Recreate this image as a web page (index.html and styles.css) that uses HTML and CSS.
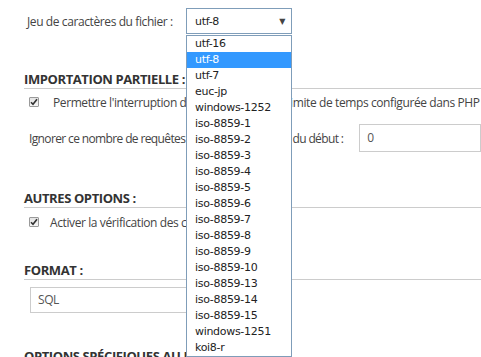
FILE: index.html
```html
<!DOCTYPE html>
<html lang="fr">
<head>
  <meta charset="UTF-8">
  <meta name="viewport" content="width=device-width, initial-scale=1.0">
  <title>Importer</title>
  <link rel="stylesheet" href="styles.css">
</head>
<body>
  <div class="page">
    <div class="charset-row">
      <label class="charset-label">Jeu de caractères du fichier :</label>
      <div class="select-box">
        <span>utf-8</span>
        <span class="arrow">▼</span>
        <ul class="select-list">
          <li>utf-16</li>
          <li class="active">utf-8</li>
          <li>utf-7</li>
          <li>euc-jp</li>
          <li>windows-1252</li>
          <li>iso-8859-1</li>
          <li>iso-8859-2</li>
          <li>iso-8859-3</li>
          <li>iso-8859-4</li>
          <li>iso-8859-5</li>
          <li>iso-8859-6</li>
          <li>iso-8859-7</li>
          <li>iso-8859-8</li>
          <li>iso-8859-9</li>
          <li>iso-8859-10</li>
          <li>iso-8859-13</li>
          <li>iso-8859-14</li>
          <li>iso-8859-15</li>
          <li>windows-1251</li>
          <li>koi8-r</li>
        </ul>
      </div>
    </div>

    <h2 class="section-title first">Importation partielle :</h2>
    <div class="check-row">
      <span class="checkbox"><svg viewBox="0 0 8 8" width="8" height="8"><path d="M1 4.2 L3 6.3 L7 1.2" fill="none" stroke="#333" stroke-width="1.6"/></svg></span>
      <span class="check-label">Permettre l'interruption de l'importation si la limite de temps configurée dans PHP est sur le point d'être atteinte.</span>
    </div>
    <div class="skip-row">
      <label class="skip-label">Ignorer ce nombre de requêtes (pour le SQL) à partir du début :</label>
      <div class="text-input">0</div>
    </div>

    <h2 class="section-title second">Autres options :</h2>
    <div class="check-row narrow">
      <span class="checkbox"><svg viewBox="0 0 8 8" width="8" height="8"><path d="M1 4.2 L3 6.3 L7 1.2" fill="none" stroke="#333" stroke-width="1.6"/></svg></span>
      <span class="check-label">Activer la vérification des clés étrangères</span>
    </div>

    <h2 class="section-title third">Format :</h2>
    <div class="format-box">SQL</div>

    <h2 class="section-title fourth">Options spécifiques au format :</h2>
  </div>
</body>
</html>
```

FILE: styles.css
```css
/* General */
html, body {
  margin: 0;
  overflow: hidden;
  background: #fff;
}

body {
  font-family: 'Open Sans', sans-serif;
  font-size: 12px;
  letter-spacing: -0.4px;
  color: #444;
}

.page {
  padding-left: 24px;
  white-space: nowrap;
}

/* Charset row */
.charset-row {
  display: flex;
  align-items: center;
  padding-top: 8px;
  height: 26px;
}

.charset-label {
  width: 159px;
  padding-left: 3px;
}

.select-box {
  position: relative;
  box-sizing: border-box;
  width: 106px;
  height: 26px;
  border: 1px solid #7f9db9;
  display: flex;
  align-items: center;
  justify-content: space-between;
  padding: 0 6px 0 8px;
  font-family: 'DejaVu Sans', sans-serif;
  font-size: 11px;
  letter-spacing: -0.3px;
  color: #222;
}

.arrow {
  font-size: 8px;
  color: #444;
}

/* Open dropdown */
.select-list {
  position: absolute;
  top: 26px;
  left: -1px;
  width: 104px;
  margin: 0;
  padding: 0;
  list-style: none;
  background: #fff;
  border: 1px solid #7f9db9;
  z-index: 10;
}

.select-list li {
  height: 16px;
  line-height: 16px;
  padding-left: 8px;
  color: #222;
}

.select-list li.active {
  background: #3399ff;
  color: #fff;
}

/* Section headings */
.section-title {
  margin: 0;
  height: 18px;
  line-height: 18px;
  font-size: 13px;
  font-weight: bold;
  letter-spacing: -0.4px;
  text-transform: uppercase;
  color: #333;
  border-bottom: 1px solid #ccc;
}

.section-title.first { margin-top: 36px; }
.section-title.second { margin-top: 37px; }
.section-title.third { margin-top: 30px; }
.section-title.fourth { margin-top: 34px; border-bottom: none; }

/* Checkbox rows */
.check-row {
  display: flex;
  align-items: center;
  height: 18px;
  margin-top: 4px;
  padding-left: 5px;
}

.check-row.narrow {
  margin-top: 5px;
}

.checkbox {
  box-sizing: border-box;
  width: 10px;
  height: 10px;
  border: 1px solid #9a9a9a;
  border-radius: 1px;
  background: linear-gradient(#e4e4e4, #f6f6f6);
  display: flex;
  align-items: center;
  justify-content: center;
  margin-right: 14px;
}

.check-row.narrow .checkbox {
  margin-right: 11px;
}

/* Skip queries row */
.skip-row {
  display: flex;
  align-items: center;
  height: 28px;
  margin-top: 13px;
  padding-left: 5px;
}

.skip-label {
  letter-spacing: -0.63px;
}

.text-input {
  box-sizing: border-box;
  height: 28px;
  width: 200px;
  margin-left: 16px;
  border: 1px solid #ccc;
  padding-left: 7px;
  line-height: 26px;
  color: #555;
}

/* Format */
.format-box {
  box-sizing: border-box;
  width: 240px;
  height: 26px;
  margin: 7px 0 0 6px;
  border: 1px solid #ccc;
  padding-left: 7px;
  line-height: 24px;
  color: #555;
}
```
